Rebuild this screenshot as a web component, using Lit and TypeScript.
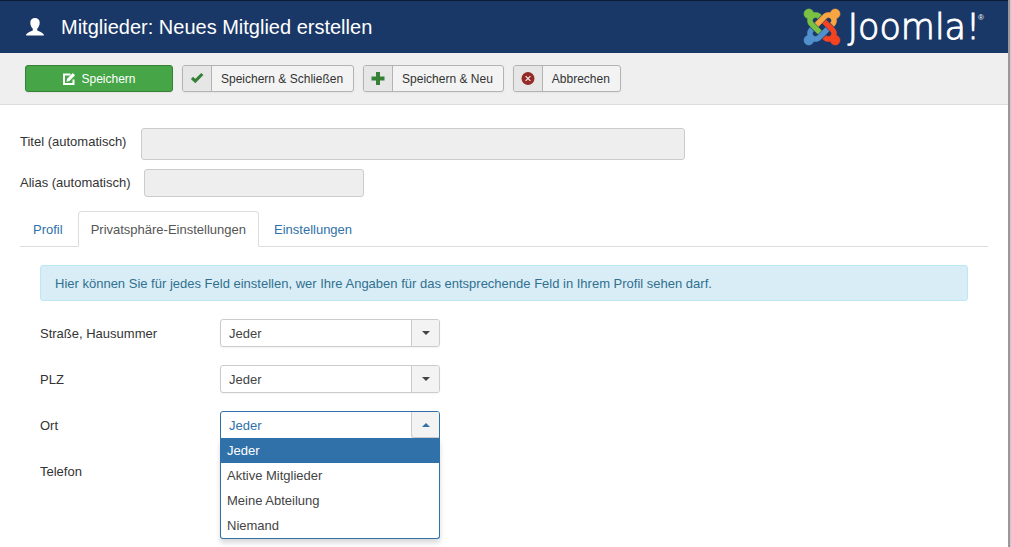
import { LitElement, html, css, svg } from "lit";
import { customElement, state } from "lit/decorators.js";

const OPTIONS = ["Jeder", "Aktive Mitglieder", "Meine Abteilung", "Niemand"];

const FIELDS = [
  { id: "strasse", label: "Straße, Hausummer" },
  { id: "plz", label: "PLZ" },
  { id: "ort", label: "Ort" },
  { id: "telefon", label: "Telefon" },
];

const KNOT =
  "M16.719 14.759L14.22 17.26l-2.37 2.37-.462.466c-1.368 1.365-3.297 1.83-5.047 1.397-.327 1.424-1.604 2.49-3.13 2.49C1.438 23.983 0 22.547 0 20.772c0-1.518 1.055-2.789 2.469-3.123-.446-1.76.016-3.705 1.396-5.08l.179-.18 2.37 2.37-.184.181c-.769.779-.769 2.024 0 2.789.771.78 2.022.78 2.787 0l.465-.465 2.367-2.371 2.502-2.506z";

const KNOT_PARTS = [
  { color: "#5091cd", angle: 0 },
  { color: "#7ac143", angle: 90 },
  { color: "#f9a541", angle: 180 },
  { color: "#f44321", angle: 270 },
];

@customElement("app-root")
export class AppRoot extends LitElement {
  static styles = css`
    :host {
      display: block;
      min-height: 100vh;
      box-sizing: border-box;
      border-right: 1px solid #c8c8c8;
      background: #fff;
      color: #333;
      font: 13px/18px "Liberation Sans", Arial, sans-serif;
    }
    .page {
      min-height: 100vh;
      box-sizing: border-box;
      border-right: 2px solid #999;
      overflow: hidden;
    }
    .header {
      display: flex;
      align-items: center;
      height: 52px;
      padding: 0 24px 0 26px;
      border-top: 1px solid #0d1c33;
      background: #1a3867;
      color: #fff;
    }
    .user {
      width: 18px;
      height: 18px;
      margin-right: 17px;
    }
    .title {
      flex: 1;
      margin: 0;
      font-size: 20px;
      line-height: 24px;
      font-weight: 400;
    }
    .logo {
      display: flex;
      align-items: center;
      gap: 8px;
    }
    .knot {
      width: 36px;
      height: 36px;
      overflow: visible;
    }
    .word {
      font: 200 35px/40px "DejaVu Sans", sans-serif;
      -webkit-text-stroke: 1px #fff;
    }
    .reg {
      align-self: flex-start;
      margin-left: -10px;
      font-size: 8px;
      line-height: 22px;
    }
    .toolbar {
      display: flex;
      flex-wrap: wrap;
      gap: 9px;
      padding: 12px 25px;
      border-bottom: 1px solid #ddd;
      background: #efefef;
    }
    .btn {
      display: flex;
      align-items: stretch;
      box-sizing: border-box;
      height: 27px;
      padding: 0;
      border: 1px solid #b3b3b3;
      border-radius: 3px;
      background: #f3f3f3;
      color: #333;
      font: 12px/26px "Liberation Sans", Arial, sans-serif;
      overflow: hidden;
      box-shadow: 0 1px 2px rgba(0, 0, 0, 0.05);
    }
    .btn-icon {
      display: flex;
      align-items: center;
      justify-content: center;
      width: 28px;
      border-right: 1px solid #b3b3b3;
      background: #e6e6e6;
    }
    .btn-text {
      padding: 0 10px 0 9px;
    }
    .primary {
      width: 148px;
      align-items: center;
      justify-content: center;
      gap: 5px;
      border-color: #378137;
      background: #46a546;
      color: #fff;
    }
    .glyph {
      display: block;
      width: 14px;
      height: 14px;
    }
    .content {
      padding: 23px 20px 0;
    }
    .row {
      display: flex;
      align-items: flex-start;
      gap: 13px;
      margin-bottom: 9px;
    }
    .label {
      min-width: 108px;
      padding-top: 5px;
    }
    .input {
      box-sizing: border-box;
      width: 220px;
      height: 28px;
      border: 1px solid #ccc;
      border-radius: 3px;
      background: #eee;
      padding: 4px 6px;
      font: inherit;
    }
    .large {
      width: 544px;
      height: 32px;
    }
    .tabs {
      display: flex;
      gap: 2px;
      margin-top: 14px;
      border-bottom: 1px solid #ddd;
    }
    .tab {
      margin-bottom: -1px;
      padding: 9px 12px 7px;
      border: 1px solid transparent;
      border-radius: 4px 4px 0 0;
      color: #3071a9;
      text-decoration: none;
    }
    .active {
      border-color: #ddd;
      border-bottom-color: #fff;
      background: #fff;
      color: #555;
    }
    .pane {
      padding: 18px 20px 0;
    }
    .alert {
      margin-bottom: 18px;
      padding: 9px 35px 7px 14px;
      border: 1px solid #bce8f1;
      border-radius: 3px;
      background: #d9edf7;
      color: #31708f;
    }
    .field {
      display: grid;
      grid-template-columns: 180px 220px;
      margin-bottom: 18px;
    }
    .field .label {
      padding-top: 6px;
    }
    .combo {
      position: relative;
      display: grid;
    }
    .select {
      grid-area: 1 / 1;
      appearance: none;
      box-sizing: border-box;
      width: 100%;
      height: 28px;
      margin: 0;
      padding: 1px 36px 0 8px;
      border: 1px solid #ccc;
      border-radius: 3px;
      background: #fff;
      color: #444;
      font: inherit;
      box-shadow: 0 1px 2px rgba(0, 0, 0, 0.05);
    }
    .arrow {
      grid-area: 1 / 1;
      justify-self: end;
      box-sizing: border-box;
      display: flex;
      align-items: center;
      justify-content: center;
      width: 28px;
      height: 26px;
      margin: 1px;
      border-left: 1px solid #ccc;
      border-radius: 0 2px 2px 0;
      background: #f3f3f3;
      pointer-events: none;
      z-index: 1;
    }
    .arrow::after {
      content: "";
      border: 4px solid transparent;
      border-top-color: #444;
      border-bottom-width: 0;
    }
    .open .select {
      border-color: #3071a9;
      border-radius: 3px 3px 0 0;
      color: #3071a9;
    }
    .open .arrow {
      border-bottom: 1px solid #ccc;
      border-radius: 0 2px 0 3px;
    }
    .open .arrow::after {
      border: 4px solid transparent;
      border-top-width: 0;
      border-bottom-color: #3071a9;
    }
    .list {
      position: absolute;
      top: 27px;
      left: 0;
      right: 0;
      z-index: 2;
      margin: 0;
      padding: 0;
      list-style: none;
      border: 1px solid #3071a9;
      border-top: 0;
      border-radius: 0 0 3px 3px;
      background: #fff;
      box-shadow: 0 4px 5px rgba(0, 0, 0, 0.15);
    }
    .item {
      padding: 4px 6px 3px;
      color: #444;
    }
    .chosen {
      background: #3071a9;
      color: #fff;
    }
  `;

  @state() private openField = "ort";
  @state() private values: Record<string, string> = {};

  private pick(id: string, value: string) {
    this.values = { ...this.values, [id]: value };
    this.openField = "";
  }

  private renderField(field: { id: string; label: string }) {
    const value = this.values[field.id] ?? OPTIONS[0];
    const open = this.openField === field.id;
    return html`<div class="field">
      <label class="label" for=${field.id}>${field.label}</label>
      <div class="combo ${open ? "open" : ""}">
        <select
          class="select"
          id=${field.id}
          @change=${(e: Event) => this.pick(field.id, (e.target as HTMLSelectElement).value)}
        >
          ${OPTIONS.map((o) => html`<option ?selected=${o === value}>${o}</option>`)}
        </select>
        <span class="arrow"></span>
        ${open
          ? html`<ul class="list" role="listbox">
              ${OPTIONS.map(
                (o) => html`<li
                  class="item ${o === value ? "chosen" : ""}"
                  role="option"
                  aria-selected=${o === value}
                  @click=${() => this.pick(field.id, o)}
                >${o}</li>`
              )}
            </ul>`
          : ""}
      </div>
    </div>`;
  }

  render() {
    return html`<div class="page">
      <header class="header">
        <svg class="user" viewBox="0 0 18 18" fill="#fff">
          <path d="M9 0C6.300 0 4.300 1.500 4.300 4.500c0 2.700 1 4.900 2.500 6.200v1.500C6.300 13.300 .2 14.200 0 17.400h18c-.2-3.200-6.300-4.100-6.800-5.200v-1.500c1.500-1.300 2.500-3.500 2.500-6.200C13.700 1.500 11.700 0 9 0z" />
        </svg>
        <h1 class="title">Mitglieder: Neues Mitglied erstellen</h1>
        <div class="logo">
          <svg class="knot" viewBox="0 0 24 24">
            ${KNOT_PARTS.map(
              (p) => svg`<path d=${KNOT} fill=${p.color} stroke=${p.color} stroke-width="0.4" transform="rotate(${p.angle} 12 12)" />`
            )}
          </svg>
          <span class="word">Joomla!</span>
          <span class="reg">®</span>
        </div>
      </header>
      <div class="toolbar">
        <button class="btn primary" type="button">
          <svg class="glyph" viewBox="0 0 14 14" fill="none">
            <path d="M8.500 2.500H2v9.500h9.500V7.500" stroke="#fff" stroke-width="2" />
            <path d="M4.500 9.700l.6-3L10.800 1l2.300 2.300-5.700 5.700z" fill="#fff" />
          </svg>
          Speichern
        </button>
        <button class="btn" type="button">
          <span class="btn-icon"><svg class="glyph" viewBox="0 0 14 14">
            <path d="M2 5.800l3.300 3.300L12.300 2" fill="none" stroke="#378137" stroke-width="3.200" />
          </svg></span>
          <span class="btn-text">Speichern &amp; Schließen</span>
        </button>
        <button class="btn" type="button">
          <span class="btn-icon"><svg class="glyph" viewBox="0 0 14 14">
            <path d="M5 0h4v4.500h4.500v4H9V13H5V8.500H.5v-4H5z" fill="#378137" />
          </svg></span>
          <span class="btn-text">Speichern &amp; Neu</span>
        </button>
        <button class="btn" type="button">
          <span class="btn-icon"><svg class="glyph" viewBox="0 0 14 14">
            <circle cx="7" cy="6.500" r="6.500" fill="#942a25" />
            <path d="M4.600 4.100l4.800 4.800M9.400 4.100L4.600 8.900" stroke="#e6e6e6" stroke-width="1.300" />
          </svg></span>
          <span class="btn-text">Abbrechen</span>
        </button>
      </div>
      <main class="content">
        <div class="row">
          <label class="label" for="titel">Titel (automatisch)</label>
          <input class="input large" id="titel" type="text" readonly />
        </div>
        <div class="row">
          <label class="label" for="alias">Alias (automatisch)</label>
          <input class="input" id="alias" type="text" readonly />
        </div>
        <nav class="tabs">
          <a class="tab" href="#profil">Profil</a>
          <a class="tab active" href="#privat">Privatsphäre-Einstellungen</a>
          <a class="tab" href="#einstellungen">Einstellungen</a>
        </nav>
        <section class="pane">
          <div class="alert">Hier können Sie für jedes Feld einstellen, wer Ihre Angaben für das entsprechende Feld in Ihrem Profil sehen darf.</div>
          ${FIELDS.map((f) => this.renderField(f))}
        </section>
      </main>
    </div>`;
  }
}
